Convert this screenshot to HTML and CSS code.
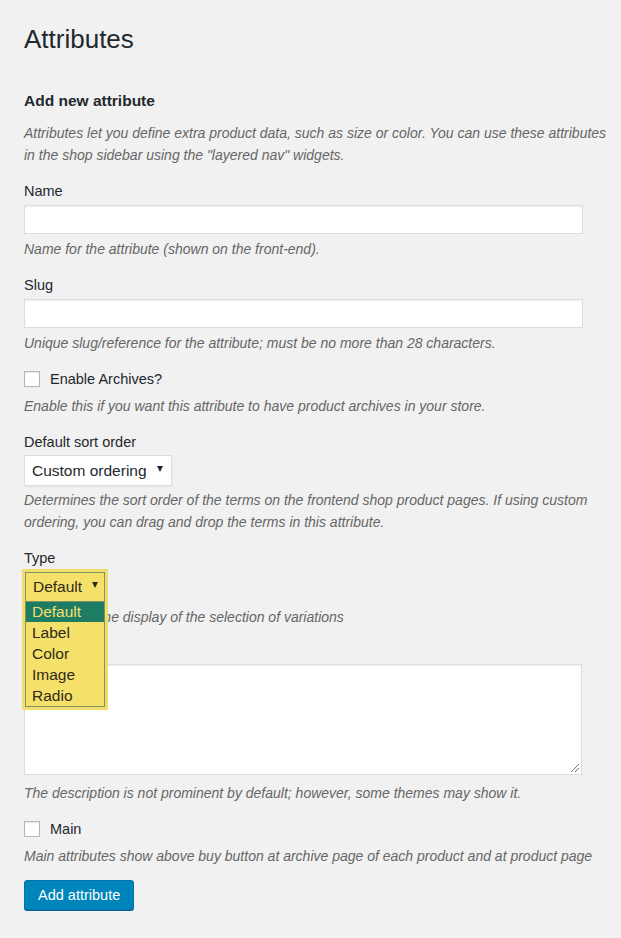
FILE: index.html
```html
<!DOCTYPE html>
<html lang="en">
<head>
<meta charset="utf-8">
<title>Attributes</title>
<link rel="stylesheet" href="styles.css">
</head>
<body>
<div class="wrap">
  <h1 class="title">Attributes</h1>
  <h2 class="subtitle">Add new attribute</h2>
  <p class="desc intro">Attributes let you define extra product data, such as size or color. You can use these attributes in the shop sidebar using the "layered nav" widgets.</p>

  <div class="field">
    <label class="label">Name</label>
    <div class="input"></div>
    <p class="desc">Name for the attribute (shown on the front-end).</p>
  </div>

  <div class="field">
    <label class="label">Slug</label>
    <div class="input"></div>
    <p class="desc">Unique slug/reference for the attribute; must be no more than 28 characters.</p>
  </div>

  <div class="field">
    <div class="check-row"><span class="checkbox"></span><span class="check-label">Enable Archives?</span></div>
    <p class="desc">Enable this if you want this attribute to have product archives in your store.</p>
  </div>

  <div class="field">
    <label class="label">Default sort order</label>
    <div class="select"><span>Custom ordering</span><span class="arrow"></span></div>
    <p class="desc">Determines the sort order of the terms on the frontend shop product pages. If using custom ordering, you can drag and drop the terms in this attribute.</p>
  </div>

  <div class="field">
    <label class="label">Type</label>
    <div class="type-wrap">
      <div class="select type-select"><span>Default</span><span class="arrow"></span></div>
      <div class="dropdown">
        <div class="dd-head"><span>Default</span><span class="arrow"></span></div>
        <ul class="dd-list">
          <li class="selected">Default</li>
          <li>Label</li>
          <li>Color</li>
          <li>Image</li>
          <li>Radio</li>
        </ul>
      </div>
    </div>
    <p class="desc">Determines the display of the selection of variations</p>
  </div>

  <div class="field">
    <label class="label label-tight">Description</label>
    <div class="textarea"></div>
    <p class="desc">The description is not prominent by default; however, some themes may show it.</p>
  </div>

  <div class="field">
    <div class="check-row"><span class="checkbox"></span><span class="check-label">Main</span></div>
    <p class="desc">Main attributes show above buy button at archive page of each product and at product page</p>
  </div>

  <button class="button" type="button">Add attribute</button>
</div>
</body>
</html>
```

FILE: styles.css
```css
html, body {
  margin: 0;
  padding: 0;
  background: #f1f1f1;
}

body {
  font-family: "Liberation Sans", Arial, sans-serif;
  color: #23282d;
  width: 621px;
  height: 938px;
  overflow: hidden;
}

.wrap {
  padding: 23px 0 0 24px;
}

.title {
  margin: 0;
  font-size: 26px;
  line-height: 32px;
  font-weight: 400;
  color: #23282d;
}

.subtitle {
  margin: 36px 0 0;
  font-size: 15.5px;
  line-height: 20px;
  font-weight: 600;
  color: #23282d;
}

.desc {
  margin: 4px 0 0;
  font-size: 14px;
  line-height: 22px;
  font-style: italic;
  color: #666;
  max-width: 584px;
}

.intro {
  margin-top: 11px;
}

.field {
  margin-top: 15px;
}

.label {
  display: block;
  font-size: 14.5px;
  line-height: 20px;
  color: #23282d;
}

.input {
  margin-top: 4px;
  width: 557px;
  height: 27px;
  background: #fff;
  border: 1px solid #ddd;
  box-shadow: inset 0 1px 2px rgba(0, 0, 0, 0.07);
}

.check-row {
  display: flex;
  align-items: center;
  gap: 10px;
  height: 20px;
  font-size: 14.5px;
}

.checkbox {
  width: 16px;
  height: 16px;
  background: #fff;
  border: 1px solid #b4b9be;
  box-sizing: border-box;
  box-shadow: inset 0 1px 2px rgba(0, 0, 0, 0.1);
}

.check-row + .desc {
  margin-top: 6px;
}

.select {
  margin-top: 3px;
  display: inline-flex;
  align-items: center;
  gap: 10px;
  height: 29px;
  padding: 0 8px 0 7px;
  background: #fff;
  border: 1px solid #ddd;
  font-size: 15.5px;
  color: #23282d;
  box-shadow: 0 1px 2px rgba(0, 0, 0, 0.05);
}

.select + .desc {
  margin-top: 3px;
}

.arrow {
  width: 0;
  height: 0;
  border-left: 3px solid transparent;
  border-right: 3px solid transparent;
  border-top: 6px solid #23282d;
  margin-top: -4px;
}

.type-wrap {
  position: relative;
  margin-top: 4px;
  height: 30px;
}

.type-select {
  margin-top: 0;
}

.type-wrap + .desc {
  margin-top: 4px;
}

.dropdown {
  position: absolute;
  left: -2px;
  top: -3px;
  width: 80px;
  padding: 3px;
  background: #efde6c;
  z-index: 2;
}

.dd-head {
  display: flex;
  align-items: center;
  gap: 10px;
  height: 28px;
  padding: 0 0 0 7px;
  background: #f5e169;
  border: 1px solid #7c9462;
  font-size: 15.5px;
  color: #2e2a1a;
}

.dd-head .arrow {
  border-top-color: #2e2a1a;
}

.dd-list {
  list-style: none;
  margin: 0;
  padding: 0;
  background: #f5e169;
  border: 1px solid #7c9462;
  border-top: 0;
  font-size: 15.5px;
  line-height: 21px;
  color: #2e2a1a;
}

.dd-list li {
  padding-left: 6px;
}

.dd-list li.selected {
  background: #1e7b64;
  color: #f3e16b;
  height: 20px;
  line-height: 20px;
}

.label-tight + .textarea {
  margin-top: 1px;
}

.textarea {
  position: relative;
  width: 556px;
  height: 109px;
  background: #fff;
  border: 1px solid #ddd;
  box-shadow: inset 0 1px 2px rgba(0, 0, 0, 0.07);
}

.textarea::after {
  content: "";
  position: absolute;
  right: 2px;
  bottom: 2px;
  width: 8px;
  height: 8px;
  background: linear-gradient(135deg, transparent 0 45%, #777 45% 55%, transparent 55% 70%, #777 70% 80%, transparent 80%);
}

.textarea + .desc {
  margin-top: 7px;
}

.button {
  display: block;
  margin-top: 13px;
  height: 30px;
  padding: 0 13px;
  background: #0085ba;
  border: 1px solid #0073aa;
  border-radius: 3px;
  box-shadow: 0 1px 0 #006799;
  color: #fff;
  font-family: "Liberation Sans", Arial, sans-serif;
  font-size: 14.5px;
}
```
